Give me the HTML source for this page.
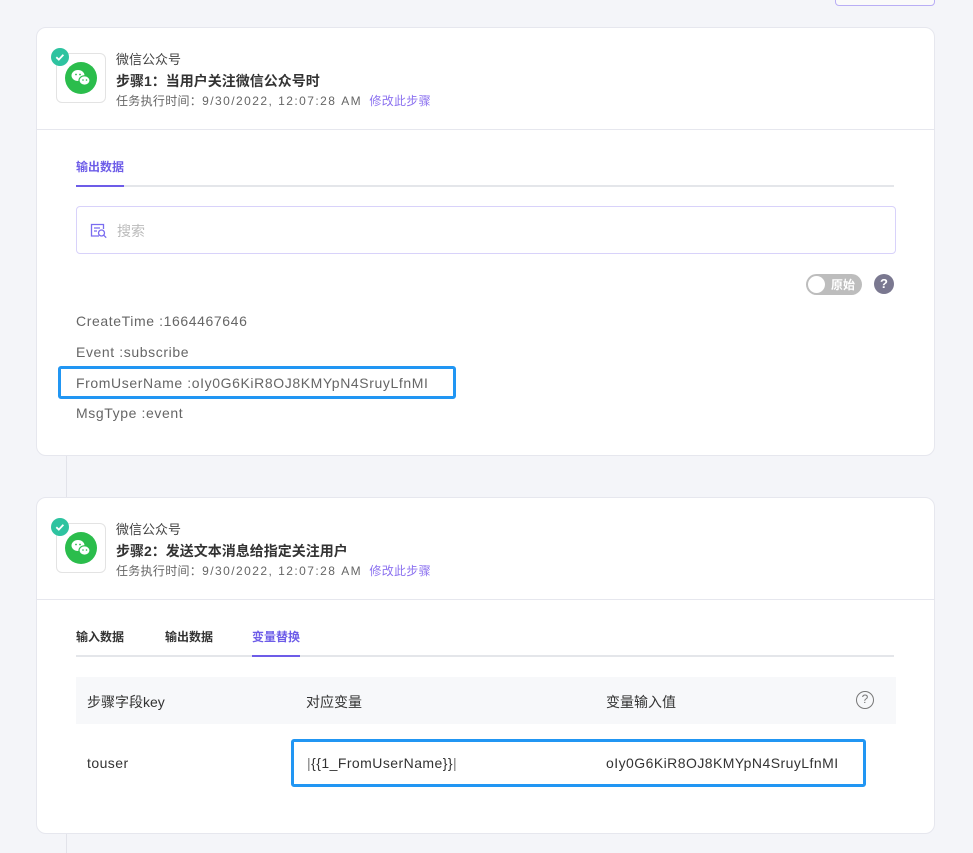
<!DOCTYPE html>
<html><head><meta charset="utf-8"><style>
*{margin:0;padding:0;box-sizing:border-box}
body{width:973px;height:851px;background:#f4f5f9;font-family:"Liberation Sans","Noto Sans CJK SC",sans-serif;position:relative;overflow:hidden;color:#333}
.a{position:absolute;white-space:nowrap}
.card{position:absolute;left:36px;width:899px;background:#fff;border:1px solid #e6e7ee;border-radius:10px}
.ibox{position:absolute;width:50px;height:50px;border:1px solid #e3e3e3;border-radius:6px;background:#fff}
.t13{font-size:13px;color:#444}
.tb{font-size:14px;font-weight:bold;color:#333}
.t12{font-size:12px;color:#666;letter-spacing:0.3px}
.t12 .n{letter-spacing:1.45px}
.lk{color:#8c72f0}
.row{font-size:14px;color:#666;letter-spacing:0.6px}
.r2{font-size:14px;color:#333;letter-spacing:0.45px}
</style></head><body>
<div class="a" style="left:835px;top:-10px;width:100px;height:16px;border:1px solid #b9aef5;border-radius:4px;background:#fafafa"></div>
<div class="a" style="left:66px;top:455px;width:1px;height:42px;background:#e2e3ea"></div>
<div class="a" style="left:66px;top:833px;width:1px;height:20px;background:#e2e3ea"></div>

<!-- card1 -->
<div class="card" style="top:27px;height:429px"></div>
<div class="a" style="left:36px;top:129px;width:899px;height:1px;background:#e6e7ee"></div>
<div class="ibox" style="left:56px;top:53px"></div>
<svg class="a" style="left:65px;top:62px" width="32" height="32" viewBox="0 0 32 32"><circle cx="16" cy="16" r="16" fill="#2bbd4c"/><ellipse cx="13" cy="13.5" rx="6.5" ry="5.5" fill="#fff"/><ellipse cx="19.5" cy="18.5" rx="5.5" ry="4.7" fill="#fff" stroke="#2bbd4c" stroke-width="1.2"/><circle cx="11" cy="12.5" r="0.9" fill="#2bbd4c"/><circle cx="15" cy="12.5" r="0.9" fill="#2bbd4c"/><circle cx="18" cy="18" r="0.8" fill="#2bbd4c"/><circle cx="21.5" cy="18" r="0.8" fill="#2bbd4c"/></svg>
<svg class="a" style="left:51px;top:48px" width="18" height="18" viewBox="0 0 18 18"><circle cx="9" cy="9" r="9" fill="#2ec3a0"/><path d="M5.3 9.2l2.5 2.4 4.6-4.8" stroke="#fff" stroke-width="1.8" fill="none"/></svg>
<div class="a t13" style="left:116px;top:49px">微信公众号</div>
<div class="a tb" style="left:116px;top:71px">步骤1：当用户关注微信公众号时</div>
<div class="a t12" style="left:116px;top:92px">任务执行时间：<span class="n">9/30/2022, 12:07:28 AM</span>&nbsp; <span class="lk">修改此步骤</span></div>

<div class="a" style="left:76px;top:158px;font-size:12px;font-weight:bold;color:#6d5ce8">输出数据</div>
<div class="a" style="left:76px;top:185px;width:818px;height:2px;background:#e4e6ea"></div>
<div class="a" style="left:76px;top:185px;width:48px;height:2px;background:#6d5ce8"></div>
<div class="a" style="left:76px;top:206px;width:820px;height:48px;border:1px solid #d8d2fa;border-radius:4px"></div>
<svg class="a" style="left:90px;top:223px" width="18" height="16" viewBox="0 0 18 16"><path d="M9 13H1.5V1.5h12V6" stroke="#7a6cf0" stroke-width="1.3" fill="none"/><path d="M4 5h6M4 8h3" stroke="#7a6cf0" stroke-width="1.3"/><circle cx="11.5" cy="10" r="3" stroke="#7a6cf0" stroke-width="1.3" fill="none"/><path d="M13.7 12.2l2.5 2.5" stroke="#7a6cf0" stroke-width="1.3"/></svg>
<div class="a" style="left:117px;top:221px;font-size:14px;color:#bbb">搜索</div>
<div class="a" style="left:806px;top:274px;width:56px;height:21px;border-radius:11px;background:#bdbdbd"></div>
<div class="a" style="left:808px;top:276px;width:17px;height:17px;border-radius:50%;background:#fff"></div>
<div class="a" style="left:831px;top:276px;font-size:12px;font-weight:bold;color:#fff">原始</div>
<div class="a" style="left:874px;top:274px;width:20px;height:20px;border-radius:50%;background:#7a7890;color:#fff;font-size:13px;font-weight:bold;text-align:center;line-height:20px">?</div>

<div class="a row" style="left:76px;top:313px">CreateTime :1664467646</div>
<div class="a row" style="left:76px;top:344px">Event :subscribe</div>
<div class="a" style="left:58px;top:366px;width:398px;height:33px;border:3px solid #2196f3;border-radius:3px"></div>
<div class="a row" style="left:76px;top:375px">FromUserName :oIy0G6KiR8OJ8KMYpN4SruyLfnMI</div>
<div class="a row" style="left:76px;top:405px">MsgType :event</div>

<!-- card2 -->
<div class="card" style="top:497px;height:337px"></div>
<div class="a" style="left:36px;top:599px;width:899px;height:1px;background:#e6e7ee"></div>
<div class="ibox" style="left:56px;top:523px"></div>
<svg class="a" style="left:65px;top:532px" width="32" height="32" viewBox="0 0 32 32"><circle cx="16" cy="16" r="16" fill="#2bbd4c"/><ellipse cx="13" cy="13.5" rx="6.5" ry="5.5" fill="#fff"/><ellipse cx="19.5" cy="18.5" rx="5.5" ry="4.7" fill="#fff" stroke="#2bbd4c" stroke-width="1.2"/><circle cx="11" cy="12.5" r="0.9" fill="#2bbd4c"/><circle cx="15" cy="12.5" r="0.9" fill="#2bbd4c"/><circle cx="18" cy="18" r="0.8" fill="#2bbd4c"/><circle cx="21.5" cy="18" r="0.8" fill="#2bbd4c"/></svg>
<svg class="a" style="left:51px;top:518px" width="18" height="18" viewBox="0 0 18 18"><circle cx="9" cy="9" r="9" fill="#2ec3a0"/><path d="M5.3 9.2l2.5 2.4 4.6-4.8" stroke="#fff" stroke-width="1.8" fill="none"/></svg>
<div class="a t13" style="left:116px;top:519px">微信公众号</div>
<div class="a tb" style="left:116px;top:541px">步骤2：发送文本消息给指定关注用户</div>
<div class="a t12" style="left:116px;top:562px">任务执行时间：<span class="n">9/30/2022, 12:07:28 AM</span>&nbsp; <span class="lk">修改此步骤</span></div>

<div class="a" style="left:76px;top:628px;font-size:12px;font-weight:bold;color:#333">输入数据</div>
<div class="a" style="left:165px;top:628px;font-size:12px;font-weight:bold;color:#333">输出数据</div>
<div class="a" style="left:252px;top:628px;font-size:12px;font-weight:bold;color:#6d5ce8">变量替换</div>
<div class="a" style="left:76px;top:655px;width:818px;height:2px;background:#e4e6ea"></div>
<div class="a" style="left:252px;top:655px;width:48px;height:2px;background:#6d5ce8"></div>

<div class="a" style="left:76px;top:677px;width:820px;height:47px;background:#f7f8fa"></div>
<div class="a" style="left:87px;top:692px;font-size:14px;color:#333">步骤字段key</div>
<div class="a" style="left:306px;top:692px;font-size:14px;color:#333">对应变量</div>
<div class="a" style="left:606px;top:692px;font-size:14px;color:#333">变量输入值</div>
<div class="a" style="left:856px;top:691px;width:18px;height:18px;border-radius:50%;border:1.5px solid #777;color:#777;font-size:12px;text-align:center;line-height:15px">?</div>

<div class="a r2" style="left:87px;top:755px">touser</div>
<div class="a" style="left:291px;top:739px;width:575px;height:48px;border:3px solid #2196f3;border-radius:3px"></div>
<div class="a r2" style="left:307px;top:755px"><span style="color:#777">|</span>{{1_FromUserName}}<span style="color:#777">|</span></div>
<div class="a r2" style="left:606px;top:755px">oIy0G6KiR8OJ8KMYpN4SruyLfnMI</div>
</body></html>
